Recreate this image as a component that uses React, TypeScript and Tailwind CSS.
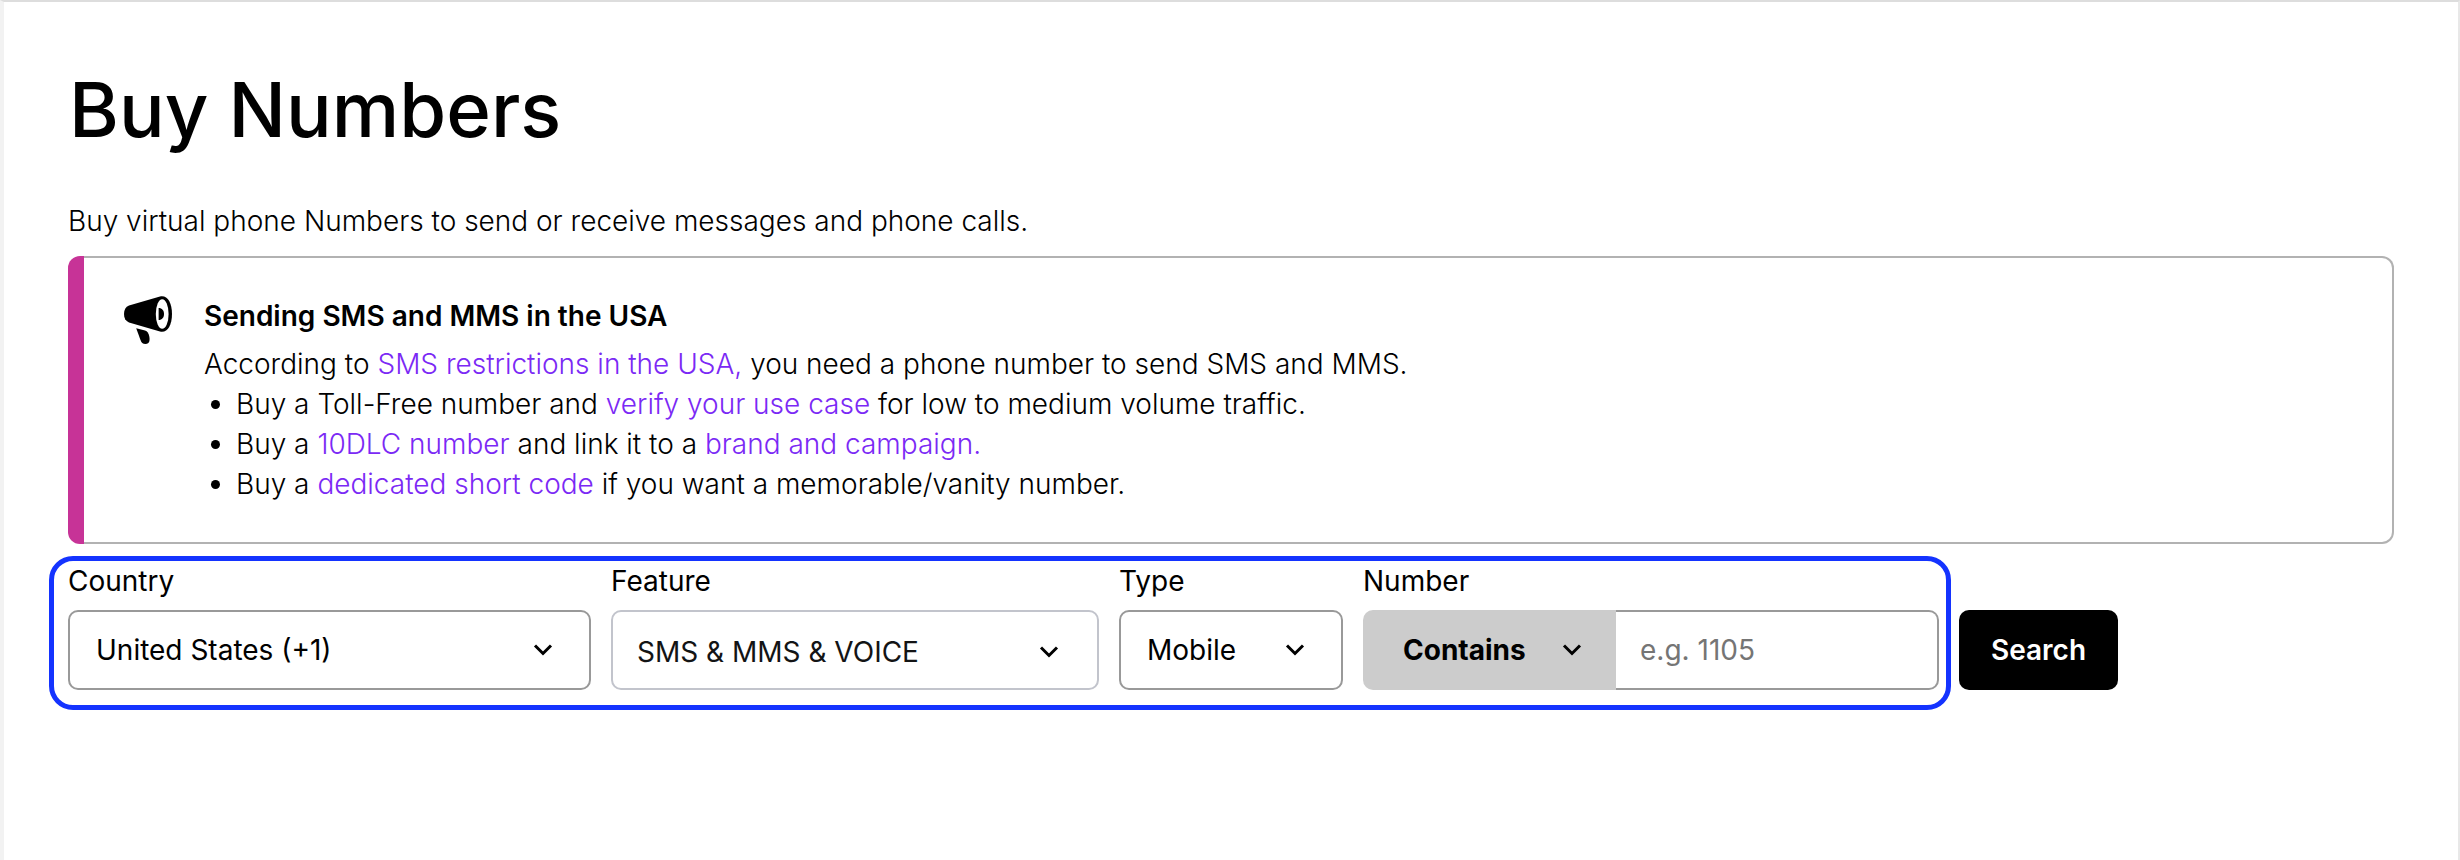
import React, { useState } from "react";

interface SelectFieldProps {
  id: string;
  label: string;
  options: string[];
  fieldClassName: string;
  selectClassName: string;
  chevronClassName: string;
}

const Chevron: React.FC<{ className: string }> = ({ className }) => (
  <svg
    className={`pointer-events-none absolute h-3 w-5 -translate-y-1/2 ${className}`}
    viewBox="0 0 20 12"
    fill="none"
    stroke="black"
    strokeWidth="3"
    aria-hidden="true"
  >
    <path d="M2 1.5 L10 9.5 L18 1.5" />
  </svg>
);

const MegaphoneIcon: React.FC = () => (
  <svg
    className="h-12 w-12 shrink-0"
    viewBox="0 0 48 48"
    aria-hidden="true"
  >
    <path d="M5 9.4 L36 0.5 C43 -1.2 48 6 48 18 C48 30 43 37.2 36 35.5 L5 26.4 C1.5 25 0 22 0 18 C0 14 1.5 10.8 5 9.4 Z" />
    <ellipse cx="38.2" cy="18" rx="6.4" ry="14.8" fill="white" />
    <path d="M34.6 12 C38 12 40 14.5 40 18 C40 21.5 38 24 34.6 24 Z" />
    <path d="M12.2 32.2 L21 34.6 C23.5 35.5 24.6 37.5 25.2 40 C26 44 25.8 48 21.5 48 C18.6 48 17.4 46.4 16.5 44 Z" />
  </svg>
);

const SelectField: React.FC<SelectFieldProps> = ({
  id,
  label,
  options,
  fieldClassName,
  selectClassName,
  chevronClassName,
}) => (
  <div className={fieldClassName}>
    <label htmlFor={id} className="block h-10 leading-10">
      {label}
    </label>
    <div className="relative mt-[9px]">
      <select
        id={id}
        className={`h-20 w-full appearance-none rounded-[10px] border-2 bg-white ${selectClassName}`}
      >
        {options.map((option) => (
          <option key={option}>{option}</option>
        ))}
      </select>
      <Chevron className={chevronClassName} />
    </div>
  </div>
);

const Link: React.FC<{ children: React.ReactNode }> = ({ children }) => (
  <a href="#" className="text-[#7b29f5] hover:underline">
    {children}
  </a>
);

const Notice: React.FC = () => (
  <section className="mr-16 ml-[19px] flex overflow-hidden rounded-l-xl">
    <div className="w-4 shrink-0 bg-[#c73397]" />
    <div className="flex grow gap-8 rounded-r-xl border-2 border-l-0 border-[#b2b2b2] py-[38px] pl-10">
      <MegaphoneIcon />
      <div className="leading-10">
        <h2 className="mb-2 font-semibold">Sending SMS and MMS in the USA</h2>
        <p>
          According to <Link>SMS restrictions in the USA,</Link> you need a
          phone number to send SMS and MMS.
        </p>
        <ul className="list-disc pl-8">
          <li>
            Buy a Toll-Free number and <Link>verify your use case</Link> for low
            to medium volume traffic.
          </li>
          <li>
            Buy a <Link>10DLC number</Link> and link it to a{" "}
            <Link>brand and campaign.</Link>
          </li>
          <li>
            Buy a <Link>dedicated short code</Link> if you want a
            memorable/vanity number.
          </li>
        </ul>
      </div>
    </div>
  </section>
);

const SearchForm: React.FC = () => {
  const [pattern, setPattern] = useState("");

  return (
    <form
      className="mt-3 flex flex-wrap items-start gap-2 font-normal"
      onSubmit={(e) => e.preventDefault()}
    >
      <div className="flex flex-wrap gap-5 rounded-3xl border-5 border-[#1433ff] pr-[7px] pb-[15px] pl-[14px]">
        <SelectField
          id="country"
          label="Country"
          options={["United States (+1)", "Canada (+1)"]}
          fieldClassName="w-[523px]"
          selectClassName="border-[#999999] pl-[26px]"
          chevronClassName="top-10 right-[38px]"
        />
        <SelectField
          id="feature"
          label="Feature"
          options={["SMS & MMS & VOICE", "SMS", "VOICE"]}
          fieldClassName="w-[488px]"
          selectClassName="border-[#c2c4cc] pt-1 pl-6 text-[#131415]"
          chevronClassName="top-[42px] right-[40px]"
        />
        <SelectField
          id="type"
          label="Type"
          options={["Mobile", "Landline"]}
          fieldClassName="w-[224px]"
          selectClassName="border-[#999999] pl-[26px]"
          chevronClassName="top-10 right-[38px]"
        />
        <div className="w-[576px]">
          <label htmlFor="number" className="block h-10 leading-10">
            Number
          </label>
          <div className="mt-[9px] flex">
            <div className="relative w-[253px] shrink-0">
              <select
                aria-label="Number match"
                className="h-20 w-full appearance-none rounded-l-[10px] bg-[#cccccc] pl-10 font-bold"
              >
                <option>Contains</option>
                <option>Starts with</option>
                <option>Ends with</option>
              </select>
              <Chevron className="top-10 right-[34px]" />
            </div>
            <input
              id="number"
              type="text"
              value={pattern}
              onChange={(e) => setPattern(e.target.value)}
              placeholder="e.g. 1105"
              className="h-20 w-full min-w-0 rounded-r-[10px] border-2 border-l-0 border-[#999999] pl-6 placeholder:text-[#757575]"
            />
          </div>
        </div>
      </div>
      <button
        type="submit"
        className="mt-[54px] h-20 rounded-[10px] bg-black px-8 font-semibold text-white"
      >
        Search
      </button>
    </form>
  );
};

const App: React.FC = () => (
  <main className="min-h-screen border-t-2 border-r-2 border-l-4 border-t-[#dddddd] border-r-[#e8e8e8] border-l-[#f2f2f2] bg-white pt-[63px] pl-[45px] font-[Inter,sans-serif] text-[28px] font-light text-black">
    <h1 className="ml-5 text-[76px] leading-[88px] font-medium">
      Buy Numbers
    </h1>
    <p className="mt-12 mb-[15px] ml-[19px] leading-10">
      Buy virtual phone Numbers to send or receive messages and phone calls.
    </p>
    <Notice />
    <SearchForm />
  </main>
);

export default App;
